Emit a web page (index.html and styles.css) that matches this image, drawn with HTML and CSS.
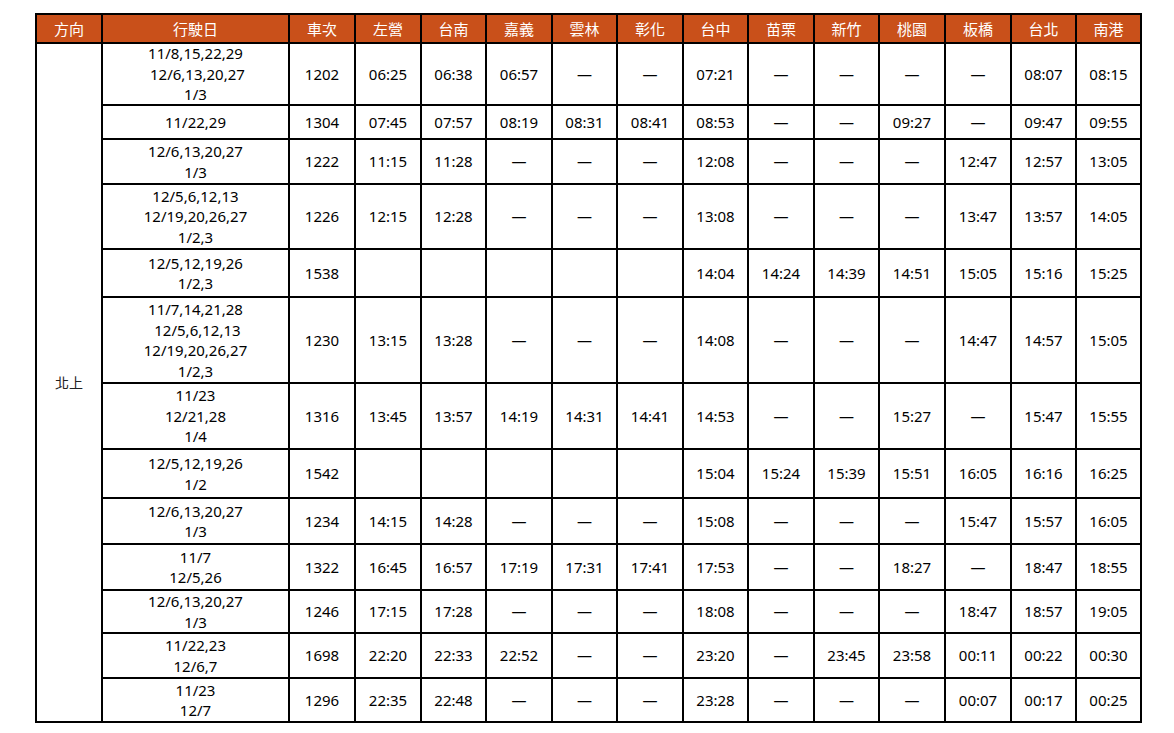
FILE: index.html
```html
<!DOCTYPE html>
<html lang="zh-Hant">
<head>
<meta charset="utf-8">
<title>北上時刻表</title>
<link rel="stylesheet" href="styles.css">
</head>
<body>
<div class="timetable">
  <div class="h">方向</div><div class="h">行駛日</div><div class="h">車次</div>
  <div class="h">左營</div><div class="h">台南</div><div class="h">嘉義</div><div class="h">雲林</div>
  <div class="h">彰化</div><div class="h">台中</div><div class="h">苗栗</div><div class="h">新竹</div>
  <div class="h">桃園</div><div class="h">板橋</div><div class="h">台北</div><div class="h">南港</div>

  <div class="c dir">北上</div>

  <div class="c">11/8,15,22,29<br>&nbsp;12/6,13,20,27<br>1/3</div><div class="c">1202</div>
  <div class="c">06:25</div><div class="c">06:38</div><div class="c">06:57</div><div class="c">—</div><div class="c">—</div><div class="c">07:21</div><div class="c">—</div><div class="c">—</div><div class="c">—</div><div class="c">—</div><div class="c">08:07</div><div class="c">08:15</div>

  <div class="c">11/22,29</div><div class="c">1304</div>
  <div class="c">07:45</div><div class="c">07:57</div><div class="c">08:19</div><div class="c">08:31</div><div class="c">08:41</div><div class="c">08:53</div><div class="c">—</div><div class="c">—</div><div class="c">09:27</div><div class="c">—</div><div class="c">09:47</div><div class="c">09:55</div>

  <div class="c">12/6,13,20,27<br>1/3</div><div class="c">1222</div>
  <div class="c">11:15</div><div class="c">11:28</div><div class="c">—</div><div class="c">—</div><div class="c">—</div><div class="c">12:08</div><div class="c">—</div><div class="c">—</div><div class="c">—</div><div class="c">12:47</div><div class="c">12:57</div><div class="c">13:05</div>

  <div class="c">12/5,6,12,13<br>12/19,20,26,27<br>1/2,3</div><div class="c">1226</div>
  <div class="c">12:15</div><div class="c">12:28</div><div class="c">—</div><div class="c">—</div><div class="c">—</div><div class="c">13:08</div><div class="c">—</div><div class="c">—</div><div class="c">—</div><div class="c">13:47</div><div class="c">13:57</div><div class="c">14:05</div>

  <div class="c">12/5,12,19,26<br>1/2,3</div><div class="c">1538</div>
  <div class="c"></div><div class="c"></div><div class="c"></div><div class="c"></div><div class="c"></div><div class="c">14:04</div><div class="c">14:24</div><div class="c">14:39</div><div class="c">14:51</div><div class="c">15:05</div><div class="c">15:16</div><div class="c">15:25</div>

  <div class="c">11/7,14,21,28<br>&nbsp;12/5,6,12,13<br>12/19,20,26,27<br>1/2,3</div><div class="c">1230</div>
  <div class="c">13:15</div><div class="c">13:28</div><div class="c">—</div><div class="c">—</div><div class="c">—</div><div class="c">14:08</div><div class="c">—</div><div class="c">—</div><div class="c">—</div><div class="c">14:47</div><div class="c">14:57</div><div class="c">15:05</div>

  <div class="c">11/23<br>12/21,28<br>1/4</div><div class="c">1316</div>
  <div class="c">13:45</div><div class="c">13:57</div><div class="c">14:19</div><div class="c">14:31</div><div class="c">14:41</div><div class="c">14:53</div><div class="c">—</div><div class="c">—</div><div class="c">15:27</div><div class="c">—</div><div class="c">15:47</div><div class="c">15:55</div>

  <div class="c">12/5,12,19,26<br>1/2</div><div class="c">1542</div>
  <div class="c"></div><div class="c"></div><div class="c"></div><div class="c"></div><div class="c"></div><div class="c">15:04</div><div class="c">15:24</div><div class="c">15:39</div><div class="c">15:51</div><div class="c">16:05</div><div class="c">16:16</div><div class="c">16:25</div>

  <div class="c">12/6,13,20,27<br>1/3</div><div class="c">1234</div>
  <div class="c">14:15</div><div class="c">14:28</div><div class="c">—</div><div class="c">—</div><div class="c">—</div><div class="c">15:08</div><div class="c">—</div><div class="c">—</div><div class="c">—</div><div class="c">15:47</div><div class="c">15:57</div><div class="c">16:05</div>

  <div class="c">11/7<br>12/5,26</div><div class="c">1322</div>
  <div class="c">16:45</div><div class="c">16:57</div><div class="c">17:19</div><div class="c">17:31</div><div class="c">17:41</div><div class="c">17:53</div><div class="c">—</div><div class="c">—</div><div class="c">18:27</div><div class="c">—</div><div class="c">18:47</div><div class="c">18:55</div>

  <div class="c">12/6,13,20,27<br>1/3</div><div class="c">1246</div>
  <div class="c">17:15</div><div class="c">17:28</div><div class="c">—</div><div class="c">—</div><div class="c">—</div><div class="c">18:08</div><div class="c">—</div><div class="c">—</div><div class="c">—</div><div class="c">18:47</div><div class="c">18:57</div><div class="c">19:05</div>

  <div class="c">11/22,23<br>12/6,7</div><div class="c">1698</div>
  <div class="c">22:20</div><div class="c">22:33</div><div class="c">22:52</div><div class="c">—</div><div class="c">—</div><div class="c">23:20</div><div class="c">—</div><div class="c">23:45</div><div class="c">23:58</div><div class="c">00:11</div><div class="c">00:22</div><div class="c">00:30</div>

  <div class="c">11/23<br>12/7</div><div class="c">1296</div>
  <div class="c">22:35</div><div class="c">22:48</div><div class="c">—</div><div class="c">—</div><div class="c">—</div><div class="c">23:28</div><div class="c">—</div><div class="c">—</div><div class="c">—</div><div class="c">00:07</div><div class="c">00:17</div><div class="c">00:25</div>
</div>
</body>
</html>
```

FILE: styles.css
```css
html, body {
  margin: 0;
  background: #fff;
}
body {
  padding: 13px 0 0 35px;
  font-family: "Noto Sans", "Noto Sans CJK TC", sans-serif;
  font-size: 15px;
  color: #000;
}
.timetable {
  display: inline-grid;
  background: #000;
  padding: 2px;
  gap: 2px;
  grid-template-columns: 64px 185px 64px 64px 63px 64px 63px 64px 63px 64px 63px 64px 64px 63px 63px;
  grid-template-rows: 27px 60px 32px 43px 63px 46px 84px 64px 47px 44px 44px 41px 43px 42px;
}
.h,
.c {
  display: flex;
  align-items: center;
  justify-content: center;
  text-align: center;
  white-space: nowrap;
  overflow: hidden;
}
.h {
  background: #c9501a;
  color: #fff;
  font-family: "Noto Sans CJK TC", sans-serif;
  line-height: 1;
}
.c {
  background: #fff;
  line-height: 20.5px;
}
.dir {
  grid-column: 1;
  grid-row: 2 / span 13;
  font-family: "Noto Sans CJK TC", sans-serif;
  font-size: 14px;
  color: #222;
}
```
